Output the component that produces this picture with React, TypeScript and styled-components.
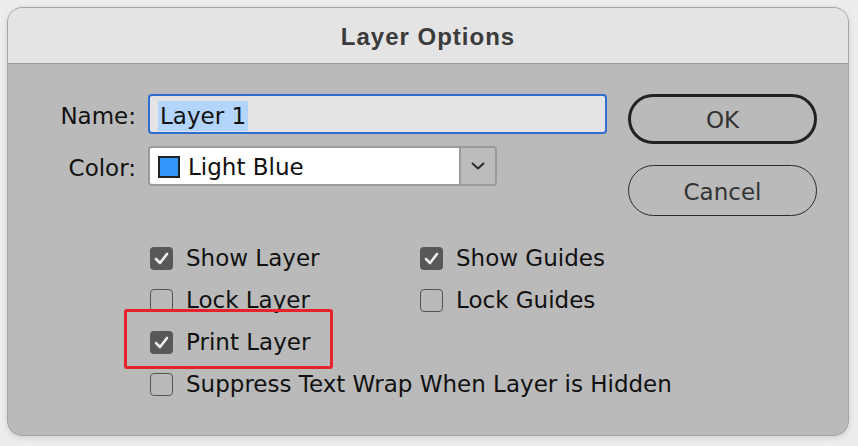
import React from "react";
import styled, { createGlobalStyle } from "styled-components";

const Global = createGlobalStyle`
  html, body { margin: 0; padding: 0; background: #ededed; }
  body { font-family: "DejaVu Sans", "Liberation Sans", sans-serif; }
`;

const Page = styled.div`
  width: 858px;
  height: 446px;
  padding: 7px 9px 10px 7px;
  box-sizing: border-box;
`;

const Dialog = styled.div`
  width: 842px;
  height: 429px;
  box-sizing: border-box;
  border: 1px solid #a4a4a4;
  border-radius: 15px;
  overflow: hidden;
  background: #bababa;
  display: flex;
  flex-direction: column;
  box-shadow: 0 2px 6px rgba(0,0,0,0.12);
`;

const TitleBar = styled.div`
  height: 56px;
  flex: none;
  background: #e4e4e4;
  border-bottom: 1px solid #9a9a9a;
  display: flex;
  align-items: center;
  justify-content: center;
  font-family: "Liberation Sans", Arial, sans-serif;
  font-weight: bold;
  font-size: 24px;
  letter-spacing: 1px;
  color: #3b3b3b;
  padding-top: 2px;
  box-sizing: border-box;
`;

const Body = styled.div`
  flex: 1;
  display: flex;
  flex-direction: column;
  padding-top: 30px;
`;

const Top = styled.div`
  display: flex;
  align-items: flex-start;
`;

const Form = styled.div`
  display: grid;
  grid-template-columns: 128px 459px;
  column-gap: 12px;
  row-gap: 12px;
  align-items: center;
`;

const Label = styled.div`
  text-align: right;
  font-size: 23px;
  color: #111;
  padding-top: 3px;
`;

const NameInput = styled.div`
  height: 40px;
  box-sizing: border-box;
  border: 2px solid #2f6dd0;
  border-radius: 4px;
  background: #e4e4e4;
  display: flex;
  align-items: center;
  padding-left: 8px;
  padding-top: 3px;
`;

const Selected = styled.span`
  background: #b3d5fb;
  color: #111;
  font-size: 23px;
  line-height: 30px;
  padding: 0 2px 0 2px;
`;

const Select = styled.div`
  width: 349px;
  height: 40px;
  box-sizing: border-box;
  border: 2px solid #9b9b9b;
  border-radius: 4px;
  display: flex;
  overflow: hidden;
`;

const SelectField = styled.div`
  width: 311px;
  background: #fff;
  border-right: 2px solid #999;
  display: flex;
  align-items: center;
  padding-left: 8px;
  padding-top: 2px;
  gap: 8px;
  box-sizing: border-box;
  font-size: 23px;
  color: #111;
`;

const Swatch = styled.span<{ $color: string }>`
  width: 22px;
  height: 22px;
  box-sizing: border-box;
  border: 2px solid #222;
  background: ${(p) => p.$color};
  flex: none;
`;

const SelectButton = styled.div`
  flex: 1;
  display: flex;
  align-items: center;
  justify-content: center;
  background: #bcbcbc;
`;

const Buttons = styled.div`
  margin-left: 21px;
  display: flex;
  flex-direction: column;
  gap: 21px;
`;

const Button = styled.div<{ $primary?: boolean }>`
  width: 189px;
  height: ${(p) => (p.$primary ? 50 : 51)}px;
  box-sizing: border-box;
  border: ${(p) => (p.$primary ? "3px solid #222" : "1.5px solid #2a2a2a")};
  border-radius: 26px;
  display: flex;
  align-items: center;
  justify-content: center;
  font-size: 23px;
  color: #333;
  padding-top: 2px;
`;

const Options = styled.div`
  margin-top: 21px;
  margin-left: 142px;
  display: grid;
  grid-template-columns: 270px auto;
  grid-auto-rows: 42px;
`;

const OptionRow = styled.div<{ $span?: boolean }>`
  position: relative;
  display: flex;
  align-items: center;
  gap: 13px;
  font-size: 23px;
  color: #111;
  grid-column: ${(p) => (p.$span ? "1 / -1" : "auto")};
`;

const Box = styled.span<{ $checked?: boolean }>`
  width: 23px;
  height: 23px;
  box-sizing: border-box;
  border-radius: 4px;
  flex: none;
  display: flex;
  align-items: center;
  justify-content: center;
  background: ${(p) => (p.$checked ? "#585858" : "transparent")};
  border: ${(p) => (p.$checked ? "none" : "1.5px solid #555")};
`;

const Highlight = styled.div`
  position: absolute;
  left: -26px;
  top: -12px;
  width: 209px;
  height: 60px;
  box-sizing: border-box;
  border: 3px solid #e8222c;
  border-radius: 3px;
  pointer-events: none;
`;

const Check = () => (
  <svg width="15" height="13" viewBox="0 0 15 13">
    <path d="M2 7 L6 11 L13 2" fill="none" stroke="#eeeeee" strokeWidth="2.6" strokeLinecap="round" strokeLinejoin="round" />
  </svg>
);

const Chevron = () => (
  <svg width="14" height="8" viewBox="0 0 14 8">
    <path d="M1.5 1.5 L7 6.5 L12.5 1.5" fill="none" stroke="#2b2b2b" strokeWidth="2" strokeLinecap="round" strokeLinejoin="round" />
  </svg>
);

const Option = ({ label, checked, span, highlight }: { label: string; checked?: boolean; span?: boolean; highlight?: boolean }) => (
  <OptionRow $span={span}>
    <Box $checked={checked}>{checked && <Check />}</Box>
    <span>{label}</span>
    {highlight && <Highlight />}
  </OptionRow>
);

export default function App() {
  return (
    <>
      <Global />
      <Page>
        <Dialog>
          <TitleBar>Layer Options</TitleBar>
          <Body>
            <Top>
              <Form>
                <Label>Name:</Label>
                <NameInput>
                  <Selected>Layer 1</Selected>
                </NameInput>
                <Label>Color:</Label>
                <Select>
                  <SelectField>
                    <Swatch $color="#3398fd" />
                    Light Blue
                  </SelectField>
                  <SelectButton>
                    <Chevron />
                  </SelectButton>
                </Select>
              </Form>
              <Buttons>
                <Button $primary>OK</Button>
                <Button>Cancel</Button>
              </Buttons>
            </Top>
            <Options>
              <Option label="Show Layer" checked />
              <Option label="Show Guides" checked />
              <Option label="Lock Layer" />
              <Option label="Lock Guides" />
              <Option label="Print Layer" checked highlight />
              <div />
              <Option label="Suppress Text Wrap When Layer is Hidden" span />
            </Options>
          </Body>
        </Dialog>
      </Page>
    </>
  );
}
